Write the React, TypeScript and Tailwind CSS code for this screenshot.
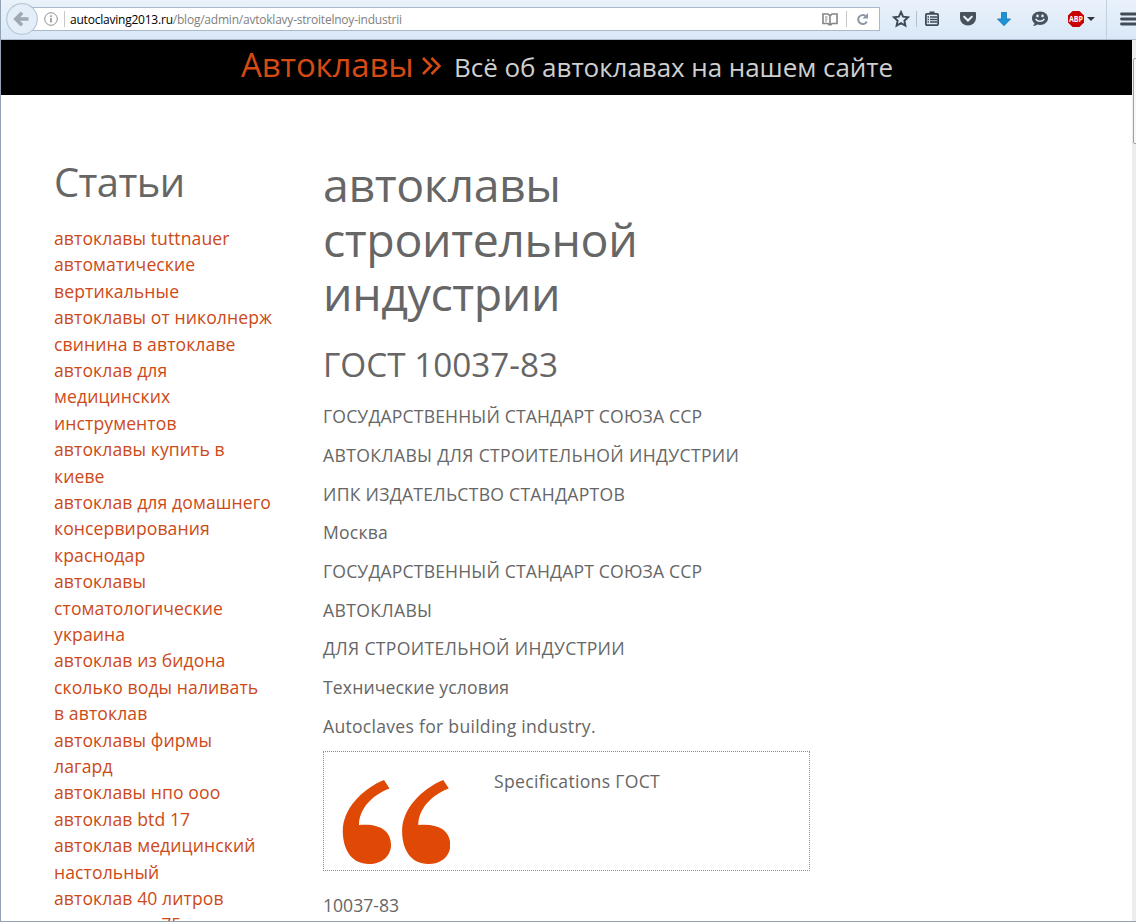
import type { ReactNode } from "react";

const ARTICLES = [
  ["автоклавы tuttnauer"],
  ["автоматические", "вертикальные", "автоклавы от николнерж"],
  ["свинина в автоклаве"],
  ["автоклав для", "медицинских", "инструментов"],
  ["автоклавы купить в", "киеве"],
  ["автоклав для домашнего", "консервирования", "краснодар"],
  ["автоклавы", "стоматологические", "украина"],
  ["автоклав из бидона"],
  ["сколько воды наливать", "в автоклав"],
  ["автоклавы фирмы", "лагард"],
  ["автоклавы нпо ооо"],
  ["автоклав btd 17"],
  ["автоклав медицинский", "настольный"],
  ["автоклав 40 литров"],
  ["автоклав вк 75"],
];

const PARAGRAPHS = [
  { text: "ГОСУДАРСТВЕННЫЙ СТАНДАРТ СОЮЗА ССР", tracking: "tracking-[0.15px]" },
  { text: "АВТОКЛАВЫ ДЛЯ СТРОИТЕЛЬНОЙ ИНДУСТРИИ", tracking: "tracking-[0.33px]" },
  { text: "ИПК ИЗДАТЕЛЬСТВО СТАНДАРТОВ", tracking: "tracking-[0.26px]" },
  { text: "Москва", tracking: "tracking-[0.2px]" },
  { text: "ГОСУДАРСТВЕННЫЙ СТАНДАРТ СОЮЗА ССР", tracking: "tracking-[0.15px]" },
  { text: "АВТОКЛАВЫ", tracking: "tracking-[0.33px]" },
  { text: "ДЛЯ СТРОИТЕЛЬНОЙ ИНДУСТРИИ", tracking: "tracking-[0.33px]" },
  { text: "Технические условия", tracking: "tracking-[0.13px]" },
  { text: "Autoclaves for building industry.", tracking: "tracking-[0.27px]" },
];

function ToolIcon({ children }: { children: ReactNode }) {
  return (
    <svg viewBox="0 0 18 18" className="h-[18px] w-[18px] shrink-0">
      {children}
    </svg>
  );
}

function Toolbar() {
  return (
    <div className="-ml-px flex h-10 shrink-0 items-center border-b border-[#aebccd] bg-linear-to-b from-[#eaf2fb] to-[#d9e8f7]">
      <svg viewBox="0 0 34 34" className="z-10 -mt-px ml-[5px] h-[34px] w-[34px] shrink-0">
        <circle cx="17" cy="17" r="15.3" fill="#e4eef9" stroke="#b9c7d6" strokeWidth="1.2" />
        <path d="M23.5 17H11.5M17 10.8 10.8 17l6.2 6.2" fill="none" stroke="#a0a8b1" strokeWidth="3.6" />
      </svg>
      <div className="-mt-px -ml-[8px] flex h-6 w-[849px] items-center border border-[#a9b9ca] bg-white">
        <svg viewBox="0 0 14 14" className="ml-[12px] h-[14px] w-[14px] shrink-0">
          <circle cx="7" cy="7" r="6.3" fill="none" stroke="#8f8f8f" />
          <path d="M7 6v4.5M7 3.3v1.6" stroke="#8f8f8f" strokeWidth="1.6" />
        </svg>
        <div className="ml-[6px] h-4 w-px bg-[#c8c8c8]" />
        <div className="mt-px ml-[5px] text-[12px] leading-[20px] tracking-[-0.22px] whitespace-nowrap text-[#808080]">
          <span className="text-black">autoclaving2013.ru</span>
          /blog/admin/avtoklavy-stroitelnoy-industrii
        </div>
        <div className="ml-auto flex items-center">
          <svg viewBox="0 0 16 14" className="h-[14px] w-4" fill="none" stroke="#858585" strokeWidth="1.6">
            <path d="M8 3H7L6 2H1v9.500h5L7 12.700h2l1-1.200h5V2h-5L9 3ZM8 3v9" />
            <path d="M3 5h2.500M3 7h2.500M3 9h2" strokeWidth="1" />
          </svg>
          <div className="ml-2 h-4 w-px bg-[#c8c8c8]" />
          <svg viewBox="0 0 14 14" className="mr-[9px] ml-[9px] h-[14px] w-[14px]">
            <path d="M10.800 9.500A4.500 4.500 0 1 1 9.500 4" fill="none" stroke="#8b98a5" strokeWidth="2" />
            <path d="M12 1v5.500H6.500Z" fill="#8b98a5" />
          </svg>
        </div>
      </div>
      <div className="-mt-px ml-3 flex items-center">
        <ToolIcon>
          <path
            d="m9 2 2.100 4.700 5 .6-3.700 3.400 1 5L9 13.200l-4.400 2.500 1-5L1.900 7.300l5-.6Z"
            fill="none"
            stroke="#414b56"
            strokeWidth="1.900"
          />
        </ToolIcon>
        <div className="mr-[6px] ml-[6px] h-4 w-px bg-[#b4c0cd]" />
        <ToolIcon>
          <path d="M6.500 1.500h5V4h-5Z" fill="#414b56" />
          <rect x="2.900" y="3.900" width="12.200" height="11.200" rx="1" fill="none" stroke="#414b56" strokeWidth="1.800" />
          <path d="M4.500 7h1.500M7 7h7M4.500 9.500h1.500M7 9.500h7M4.500 12h1.500M7 12h7" stroke="#414b56" strokeWidth="1.400" />
        </ToolIcon>
      </div>
      <div className="-mt-px ml-[18px] flex items-center gap-[18px]">
        <ToolIcon>
          <path d="M2 2h14q1 0 1 1v5a8 7.500 0 0 1-16 0V3q0-1 1-1Z" fill="#48525d" />
          <path d="m5.200 6.800 3.800 3.700 3.800-3.700" fill="none" stroke="#e9f1fa" strokeWidth="2" strokeLinecap="round" />
        </ToolIcon>
        <ToolIcon>
          <path d="M6.500 2.500h5V9h4L9 15.700 2.500 9h4Z" fill="#1b93d6" stroke="#1274ae" strokeWidth=".8" />
        </ToolIcon>
        <ToolIcon>
          <path d="M9 1.500c4.500 0 8 2.800 8 6.700s-3.500 6.700-8 6.700c-1 0-1.800-.1-2.600-.4-1.200 1-2.800 1.400-4.400 1.300 1-.8 1.400-1.700 1.400-2.700C1.900 11.900 1 10.200 1 8.200 1 4.300 4.500 1.500 9 1.500Z" fill="#48525d" />
          <circle cx="6.500" cy="5.900" r="1.300" fill="#e4eef9" />
          <circle cx="11.500" cy="5.900" r="1.300" fill="#e4eef9" />
          <path d="M4.700 8.700c.8 1.800 2.400 2.600 4.300 2.600s3.500-.8 4.300-2.600" fill="none" stroke="#e4eef9" strokeWidth="1.500" />
        </ToolIcon>
        <div className="flex items-center">
          <ToolIcon>
            <path d="M5.600 1h6.800L17 5.600v6.800L12.400 17H5.600L1 12.400V5.600Z" fill="#c80000" />
            <text x="2" y="12" fontSize="8" fontWeight="700" fill="#fff" textLength="14" lengthAdjust="spacingAndGlyphs">
              ABP
            </text>
          </ToolIcon>
          <svg viewBox="0 0 8 4" className="ml-[2px] h-1 w-2">
            <path d="M0 0h8L4 4Z" fill="#30363c" />
          </svg>
        </div>
      </div>
      <div className="ml-[11px] h-full w-px bg-[#c3d0df]" />
      <svg viewBox="0 0 16 14" className="-mt-px ml-[13px] h-[14px] w-4 shrink-0">
        <path d="M1.500 2H16M1.500 7H16M1.500 12H16" stroke="#414b56" strokeWidth="2.800" strokeLinecap="round" />
      </svg>
    </div>
  );
}

function SiteHeader() {
  return (
    <header className="flex h-[55px] shrink-0 bg-black pl-[240px] whitespace-nowrap">
      <span className="w-[173px] text-[33px] leading-[50px] tracking-[-0.15px] text-[#d64a13]">Автоклавы</span>
      <svg viewBox="0 0 19 18" className="mt-[17px] ml-[8px] h-[18px] w-[19px]" fill="none" stroke="#d64a13" strokeWidth="2.600">
        <path d="m1 1 8 8-8 8M9.500 1l8 8-8 8" />
      </svg>
      <span className="ml-[13px] text-[26px] leading-[55px] tracking-[-0.050px] text-[#cfcfcf]">
        Всё об автоклавах на нашем сайте
      </span>
    </header>
  );
}

function Sidebar() {
  return (
    <aside className="w-[269px] shrink-0 pt-[60px]">
      <h2 className="text-[40px] leading-[54px] tracking-[-0.6px] text-[#666]">Статьи</h2>
      <ul className="mt-[15.900px] text-[17.600px] leading-[26.400px] tracking-[0.09px] text-[#cc4a18]">
        {ARTICLES.map((lines) => (
          <li key={lines[0]}>
            {lines.map((line) => (
              <span key={line} className="block whitespace-nowrap">
                {line}
              </span>
            ))}
          </li>
        ))}
      </ul>
    </aside>
  );
}

function Article() {
  return (
    <main className="w-[487px] shrink-0 pt-[62px] text-[17.600px] leading-[26.400px] text-[#666]">
      <h1 className="text-[46.500px] leading-[54.500px] tracking-[-0.4px]">
        автоклавы
        <br />
        строительной
        <br />
        индустрии
      </h1>
      <h2 className="mt-[19px] text-[33.300px] leading-[48px]">ГОСТ 10037-83</h2>
      <div className="mt-[15.600px] flex flex-col gap-[12.320px] whitespace-nowrap">
        {PARAGRAPHS.map(({ text, tracking }, i) => (
          <p key={i} className={tracking}>
            {text}
          </p>
        ))}
      </div>
      <blockquote className="mt-[11.400px] flex h-[120px] border border-dotted border-[#8a8a8a]">
        <svg viewBox="0 0 108 84" className="mt-[28px] ml-[18px] h-[84px] w-[108px]" fill="#e04806">
          <path id="mark" d="M42 0 47.500 8.500C30 15 17 29 17 45c21-2 32 6 32 20 0 11-9 19-22 19C10 84 .8 70 .8 51 .8 29 20 9 42 0Z" />
          <use href="#mark" x="59.300" />
        </svg>
        <p className="mt-4 ml-[44px] tracking-[0.3px]">Specifications ГОСТ</p>
      </blockquote>
      <p className="mt-[21px]">10037-83</p>
    </main>
  );
}

export default function App() {
  return (
    <div className="flex h-[922px] w-[1136px] flex-col overflow-hidden border-b border-l border-[#94a3b3] bg-white font-['Open_Sans',sans-serif]">
      <Toolbar />
      <div className="flex min-h-0 flex-1">
        <div className="flex w-[1131px] shrink-0 flex-col overflow-hidden">
          <SiteHeader />
          <div className="flex pl-[53px]">
            <Sidebar />
            <Article />
          </div>
        </div>
        <div className="flex-1 overflow-hidden bg-[#ededed] pt-[18px] pl-px">
          <div className="h-[86px] w-4 rounded-xs border border-[#a0a0a0] bg-[#f8f8f8]" />
        </div>
      </div>
    </div>
  );
}
